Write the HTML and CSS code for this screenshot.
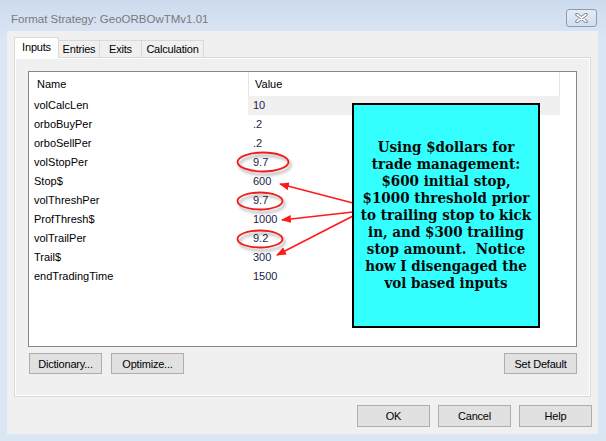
FILE: index.html
```html
<html>
  <head>
    <link rel="stylesheet" href="styles.css">
  </head>
  <body>
    <div class="window">
      <div class="titlebar">
        <span class="title">Format Strategy: GeoORBOwTMv1.01</span>
        <button class="close-btn">
          <svg width="13" height="10" viewBox="0 0 13 10">
            <path d="M2 1.5 L11 8.5 M11 1.5 L2 8.5" stroke="#6f7a88" stroke-width="3.4" stroke-linecap="round"/>
            <path d="M2 1.5 L11 8.5 M11 1.5 L2 8.5" stroke="#ffffff" stroke-width="1.6" stroke-linecap="round"/>
          </svg>
        </button>
      </div>

      <div class="client">
        <div class="tabs">
          <div class="tab active">Inputs</div>
          <div class="tab">Entries</div>
          <div class="tab">Exits</div>
          <div class="tab">Calculation</div>
        </div>

        <div class="panel">
          <div class="list">
            <div class="list-head">
              <div class="col-name">Name</div>
              <div class="col-value">Value</div>
            </div>
            <div class="row"><div class="cell-name">volCalcLen</div><div class="cell-value selected">10</div></div>
            <div class="row"><div class="cell-name">orboBuyPer</div><div class="cell-value">.2</div></div>
            <div class="row"><div class="cell-name">orboSellPer</div><div class="cell-value">.2</div></div>
            <div class="row"><div class="cell-name">volStopPer</div><div class="cell-value">9.7</div></div>
            <div class="row"><div class="cell-name">Stop$</div><div class="cell-value">600</div></div>
            <div class="row"><div class="cell-name">volThreshPer</div><div class="cell-value">9.7</div></div>
            <div class="row"><div class="cell-name">ProfThresh$</div><div class="cell-value">1000</div></div>
            <div class="row"><div class="cell-name">volTrailPer</div><div class="cell-value">9.2</div></div>
            <div class="row"><div class="cell-name">Trail$</div><div class="cell-value">300</div></div>
            <div class="row"><div class="cell-name">endTradingTime</div><div class="cell-value">1500</div></div>
          </div>

          <div class="panel-buttons">
            <button class="btn">Dictionary...</button>
            <button class="btn">Optimize...</button>
            <span class="spacer"></span>
            <button class="btn">Set Default</button>
          </div>
        </div>

        <div class="dialog-buttons">
          <button class="btn big">OK</button>
          <button class="btn big">Cancel</button>
          <button class="btn big">Help</button>
        </div>
      </div>

      <!-- markup drawn on top of the dialog: circles and arrows -->
      <svg class="marks" width="606" height="441" viewBox="0 0 606 441">
        <defs>
          <filter id="shade" x="-20%" y="-40%" width="150%" height="200%">
            <feDropShadow dx="2" dy="3" stdDeviation="1.6" flood-color="#000" flood-opacity="0.35"/>
          </filter>
          <marker id="head" markerWidth="10" markerHeight="8" refX="9" refY="4" orient="auto" markerUnits="userSpaceOnUse">
            <path d="M0 0 L10 4 L0 8 Z" fill="#ff1a1a"/>
          </marker>
        </defs>
        <g fill="none" stroke="#ee1c1c" stroke-width="1.8" filter="url(#shade)">
          <ellipse cx="263" cy="162" rx="25.5" ry="9.5"/>
          <ellipse cx="260" cy="201" rx="22.5" ry="8.5"/>
          <ellipse cx="260" cy="239" rx="22.5" ry="8.5"/>
        </g>
        <g stroke="#ff1a1a" stroke-width="1.6" marker-end="url(#head)">
          <line x1="353" y1="203" x2="280" y2="184"/>
          <line x1="353" y1="212" x2="282" y2="220"/>
          <line x1="353" y1="216" x2="277" y2="255"/>
        </g>
      </svg>

      <div class="note">
        Using $dollars for<br>
        trade management:<br>
        $600 initial stop,<br>
        $1000 threshold prior<br>
        to trailing stop to kick<br>
        in, and $300 trailing<br>
        stop amount.&nbsp; Notice<br>
        how I disengaged the<br>
        vol based inputs
      </div>
    </div>
  </body>
</html>
```

FILE: styles.css
```css
body {
  margin: 0;
  background: #dbe6f4;
  font-family: "Liberation Sans", Arial, sans-serif;
  font-size: 11px;
  color: #000;
}

.window {
  position: relative;
  width: 606px;
  height: 441px;
  display: flex;
  flex-direction: column;
  background: linear-gradient(#cddbee, #dbe6f4 40px);
}

.titlebar {
  height: 31px;
  display: flex;
  align-items: center;
  justify-content: space-between;
  padding-left: 11px;
  padding-right: 9px;
  box-sizing: border-box;
}

.title {
  font-size: 11.5px;
  color: #7a7a7a;
  margin-top: 7px;
}

.close-btn {
  width: 31px;
  height: 18px;
  margin-top: 4px;
  padding: 0;
  border: 1px solid #8d9bb0;
  border-radius: 3px;
  background: linear-gradient(#e4ebf5, #d3deec);
  display: flex;
  align-items: center;
  justify-content: center;
}

.client {
  flex: 1;
  margin: 0 8px 7px 7px;
  background: #f0f0f0;
  padding: 6px 7px 0 7px;
  display: flex;
  flex-direction: column;
}

.tabs {
  display: flex;
  align-items: flex-end;
  height: 20px;
  position: relative;
  z-index: 1;
}

.tab {
  height: 17px;
  line-height: 17px;
  border: 1px solid #d9d9d9;
  border-bottom: none;
  border-left: none;
  background: #f0f0f0;
  font-size: 11px;
  letter-spacing: -0.2px;
  text-align: center;
  box-sizing: border-box;
}

.tab:nth-child(2) { width: 41px; }
.tab:nth-child(3) { width: 42px; }
.tab:nth-child(4) { width: 62px; }

.tab.active {
  width: 45px;
  height: 21px;
  line-height: 18px;
  border-left: 1px solid #d9d9d9;
  background: #fff;
  margin-bottom: -1px;
}

.panel {
  height: 340px;
  box-sizing: border-box;
  border: 1px solid #d9d9d9;
  box-shadow: inset 0 0 0 1px #fff;
  background: #f0f0f0;
  padding: 13px 13px 0 13px;
  display: flex;
  flex-direction: column;
}

.list {
  height: 276px;
  box-sizing: border-box;
  border: 1px solid #828790;
  background: #fff;
}

.list-head {
  display: flex;
  height: 24px;
  align-items: center;
}

.col-name {
  width: 219px;
  padding-left: 8px;
  box-sizing: border-box;
  height: 100%;
  line-height: 24px;
}

.col-value {
  width: 312px;
  padding-left: 6px;
  box-sizing: border-box;
  height: 100%;
  line-height: 24px;
  border-left: 1px solid #e5e5e5;
  border-right: 1px solid #e5e5e5;
}

.row {
  display: flex;
  height: 19px;
  line-height: 19px;
}

.cell-name {
  width: 219px;
  padding-left: 5px;
  box-sizing: border-box;
}

.cell-value {
  width: 312px;
  padding-left: 5px;
  box-sizing: border-box;
  color: #1c1c4a;
}

.cell-value.selected {
  background: #f0f0f0;
}

.panel-buttons {
  display: flex;
  gap: 9px;
  margin-top: 6px;
  margin-left: 1px;
}

.spacer { flex: 1; }

.btn {
  width: 73px;
  height: 21px;
  padding: 0;
  border: 1px solid #adadad;
  background: #e1e1e1;
  font-family: "Liberation Sans", Arial, sans-serif;
  font-size: 11px;
  letter-spacing: -0.2px;
  color: #000;
}

.btn.big {
  height: 22px;
}

.dialog-buttons {
  display: flex;
  justify-content: flex-end;
  gap: 8px;
  margin-top: 8px;
  margin-right: -1px;
}

.marks {
  position: absolute;
  left: 0;
  top: 0;
  pointer-events: none;
}

.note {
  position: absolute;
  left: 352px;
  top: 103px;
  width: 188px;
  height: 225px;
  box-sizing: border-box;
  border: 2px solid #000;
  background: #33ffff;
  display: flex;
  align-items: center;
  justify-content: center;
  text-align: center;
  white-space: nowrap;
  font-family: "DejaVu Serif Condensed", "DejaVu Serif", serif;
  font-weight: bold;
  font-size: 15px;
  line-height: 17px;
  color: #0a0a0a;
}
```
